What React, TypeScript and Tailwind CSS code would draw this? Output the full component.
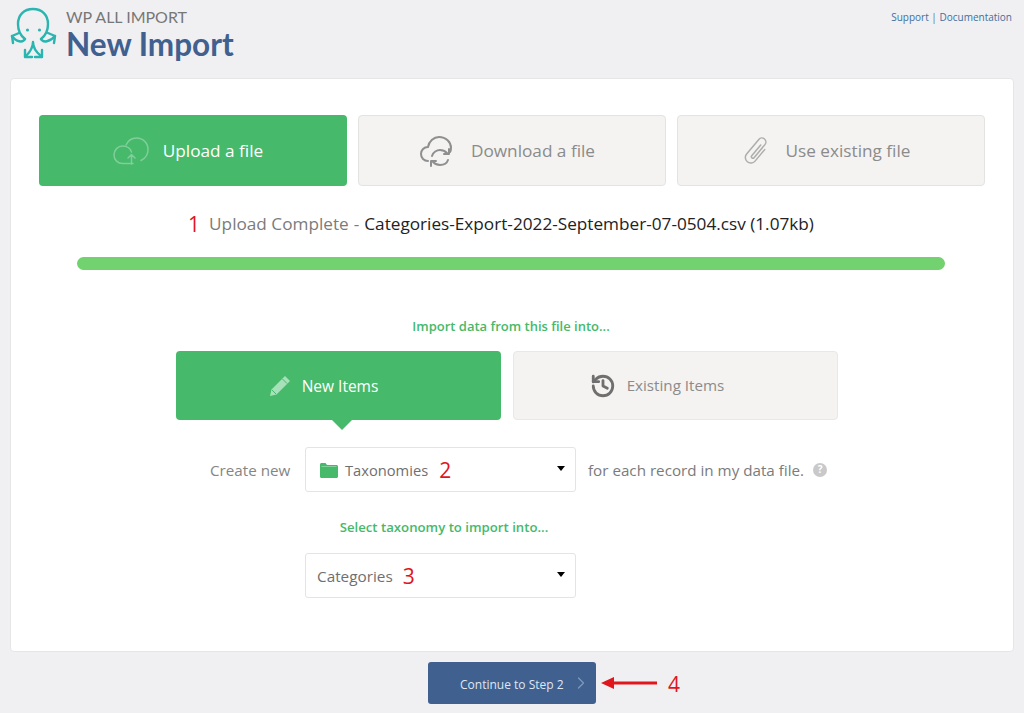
import { ChevronRight, History } from "lucide-react";

const body = "font-['Open_Sans','Noto_Sans',sans-serif]";

function OctopusLogo() {
  return (
    <svg width="50" height="52" viewBox="10 7 50 52" fill="none" stroke="#2bb5b0" strokeWidth="2.400" strokeLinecap="round" strokeLinejoin="round" aria-hidden="true">
      <path d="M25 39c-4-3-7-8-7-15 0-9 6-15 15-15s15 6 15 15c0 7-3 12-7 15" />
      <path d="M25 39c-2 4-9 3-13-3M41 39c2 4 9 3 14-3" />
      <path d="M12 36l7-3M12 36l1 7M55 36l-7-3M55 36l-1 7" />
      <path d="M33 42c0 6-3 10-7 14M33 42c0 6 3 10 8 14" />
      <path d="M25 57v-7M25 57h7M42 57v-7M42 57h-7" />
      <circle cx="27.500" cy="30" r="1.600" fill="#2bb5b0" stroke="none" />
      <circle cx="39.500" cy="30" r="1.600" fill="#2bb5b0" stroke="none" />
    </svg>
  );
}

function UploadCloud() {
  return (
    <svg width="36" height="28" viewBox="0 0 36 28" fill="none" stroke="#7fcf9b" strokeWidth="1.500" strokeLinecap="round" strokeLinejoin="round" aria-hidden="true">
      <path d="M13 8C15 3.500 19 1 23.500 1 30 1 35 6 35 12.500c0 5-3 9-7 11" />
      <path d="M20 26.500h-10.500C5 26.500 1 23 1 18s4-9 8.500-9c5 0 8 3 9 6" />
      <path d="M18.500 27v-9M15 21l3.500-3.500L22 21" />
    </svg>
  );
}

function DownloadCloud() {
  return (
    <svg width="38" height="32" viewBox="0 0 38 32" fill="none" stroke="#8f8f8f" strokeWidth="2" strokeLinecap="round" strokeLinejoin="round" aria-hidden="true">
      <path d="M9 26C5 26 2 23 2 19c0-4 3-7 7-7 1-6 6-10 11-10 7 0 12 5 12 11 0 1 0 3-1 4" />
      <path d="M13 21c1-4 5-6 8-6 3 0 5 1 7 3" />
      <path d="M30 14v5h-5" />
      <path d="M29 25c-1 3-4 5-8 5-3 0-5-1-7-3" />
      <path d="M12 31v-5h5" />
    </svg>
  );
}

function Clip() {
  return (
    <svg width="30" height="32" viewBox="0 0 30 32" fill="none" stroke="#adadad" strokeWidth="1.500" strokeLinecap="round" aria-hidden="true">
      <g transform="rotate(40 15 16)">
        <path d="M20 10v15a5.500 5.500 0 0 1-11 0V6a4 4 0 0 1 8 0v17a1.500 1.500 0 0 1-3 0V9" />
      </g>
    </svg>
  );
}

function PencilIcon() {
  return (
    <svg width="22" height="22" viewBox="0 0 22 22" aria-hidden="true">
      <path d="M16 1l5 5L7.500 19.500 1 21l1.500-6.500z" fill="#a8e0b9" />
      <path d="M13.500 4l4.500 4.500M3 15l4 4" stroke="#46b96b" strokeWidth="1" fill="none" />
    </svg>
  );
}

function Folder() {
  return (
    <svg width="18" height="15" viewBox="0 0 18 15" aria-hidden="true">
      <path d="M0 1.500C0 .7.7 0 1.500 0h4L7 2h9.500c.8 0 1.500.7 1.500 1.500v10c0 .8-.7 1.500-1.500 1.500h-15C.7 15 0 14.300 0 13.500z" fill="#46b96b" />
      <path d="M1.500 3.500h15" stroke="#8fd6a5" strokeWidth="0.8" />
    </svg>
  );
}

function Caret() {
  return <span className="-mt-[3px] w-0 h-0 border-x-[4px] border-x-transparent border-t-[5px] border-t-black" />;
}

function SelectBox({ children }: { children: React.ReactNode }) {
  return (
    <div className="w-[271px] h-[45px] bg-white border border-[#e4e4e4] rounded-[3px] flex items-center justify-between pl-[11px] pr-[10px] text-[16px] text-[#6f6f6f]">
      <div className="flex items-center pt-[2px]">{children}</div>
      <Caret />
    </div>
  );
}

function Tab({ icon, label, active }: { icon: React.ReactNode; label: string; active?: boolean }) {
  return (
    <div
      className={`w-[308px] h-[71px] rounded-[4px] flex items-center justify-center gap-[14px] pr-[10px] text-[17.200px] ${
        active ? "bg-[#46b96b] text-white" : "bg-[#f4f3f1] border border-[#e3e3e1] text-[#8b8b8b]"
      }`}
    >
      {icon}
      <span>{label}</span>
    </div>
  );
}

export default function App() {
  return (
    <div className={`w-[1024px] h-[713px] overflow-hidden bg-[#f0f0f2] px-[10px] ${body}`}>
      {/* header */}
      <div className="h-[78px] flex justify-between">
        <div className="flex">
          <div className="pt-[7px]">
            <OctopusLogo />
          </div>
          <div className="ml-[6px] pt-[7px] font-['Lato',sans-serif]">
            <div className="text-[16px] leading-[19px] text-[#777777]">WP ALL IMPORT</div>
            <div className="text-[31.500px] leading-[36px] font-bold text-[#40608f]">New Import</div>
          </div>
        </div>
        <div className="pt-[10px] pr-[2px] text-[10px] leading-[14px] text-[#5b6f8f]">
          <span className="text-[#3f6f9f]">Support</span> | <span className="text-[#3f6f9f]">Documentation</span>
        </div>
      </div>

      {/* card */}
      <div className="h-[574px] bg-white border border-[#e6e6e6] rounded-[4px] pt-[36px] px-[28px]">
        <div className="flex gap-[11px]">
          <Tab active icon={<UploadCloud />} label="Upload a file" />
          <Tab icon={<DownloadCloud />} label="Download a file" />
          <Tab icon={<Clip />} label="Use existing file" />
        </div>

        <div className="mt-[27px] h-[22px] pr-[22px] flex items-center justify-center text-[17.200px] leading-[22px] text-[#7b7b7b]">
          <span className="text-[#e0161d] text-[21px] mr-[9px]">1</span>
          <span>Upload Complete</span>
          <span className="mx-[5px]">-</span>
          <span className="text-[#222222]">Categories-Export-2022-September-07-0504.csv (1.07kb)</span>
        </div>

        <div className="mt-[22px] ml-[38px] mr-[40px] h-[13px] rounded-full bg-[#71d26f]" />

        <div className="mt-[47px] pr-[2px] text-center text-[13px] leading-[18px] font-semibold text-[#46b96b]">
          Import data from this file into...
        </div>

        <div className="mt-[16px] pr-[10px] flex justify-center gap-[12px]">
          <div className="relative w-[325px] h-[69px] pr-[30px] rounded-[4px] bg-[#46b96b] text-white text-[15.500px] flex items-center justify-center gap-[11px]">
            <PencilIcon />
            <span className="pt-[2px]">New Items</span>
            <span className="absolute left-[156px] top-[69px] w-0 h-0 border-x-[10px] border-x-transparent border-t-[10px] border-t-[#46b96b]" />
          </div>
          <div className="w-[325px] h-[69px] pr-[37px] rounded-[4px] bg-[#f4f3f1] border border-[#e8e8e6] text-[#8b8b8b] text-[15.200px] flex items-center justify-center gap-[11px]">
            <History size={26} strokeWidth={2.6} className="text-[#6f6f6f]" />
            <span>Existing Items</span>
          </div>
        </div>

        <div className="mt-[27px] flex items-center pl-[171px] text-[#7b7b7b] text-[15.200px]">
          <span className="w-[95px] pt-[1px] text-[#858585]">Create new</span>
          <SelectBox>
            <span className="ml-[3px] flex"><Folder /></span>
            <span className="ml-[7px] text-[14.700px]">Taxonomies</span>
            <span className="ml-[11px] text-[#e0161d] text-[21px] leading-none">2</span>
          </SelectBox>
          <span className="ml-[12px] pt-[1px]">for each record in my data file.</span>
          <span className="ml-[9px] w-[14px] h-[14px] rounded-full bg-[#c9c9c9] text-white text-[10px] font-bold flex items-center justify-center">?</span>
        </div>

        <div className="mt-[26px] text-center text-[13.200px] leading-[18px] font-semibold text-[#46b96b] -ml-[136px]">
          Select taxonomy to import into...
        </div>

        <div className="mt-[17px] ml-[266px]">
          <SelectBox>
            <span className="text-[15.300px]">Categories</span>
            <span className="ml-[10px] text-[#e0161d] text-[21px] leading-none">3</span>
          </SelectBox>
        </div>
      </div>

      {/* footer */}
      <div className="mt-[10px] flex items-center pl-[418px]">
        <div className="w-[168px] h-[42px] rounded-[3px] bg-[#40608f] text-[#dfe7f3] text-[12px] flex items-center pl-[32px]">
          <span className="pt-[3px]">Continue to Step 2</span>
          <ChevronRight size={20} strokeWidth={1.500} className="ml-[7px] text-[#7f97bd]" />
        </div>
        <svg className="ml-[5px]" width="56" height="14" viewBox="0 0 56 14" aria-hidden="true">
          <path d="M0 7l13-6v4.500h43v3H13V13z" fill="#e0161d" />
        </svg>
        <span className="ml-[11px] pt-[3px] text-[21px] text-[#e0161d]">4</span>
      </div>
    </div>
  );
}
